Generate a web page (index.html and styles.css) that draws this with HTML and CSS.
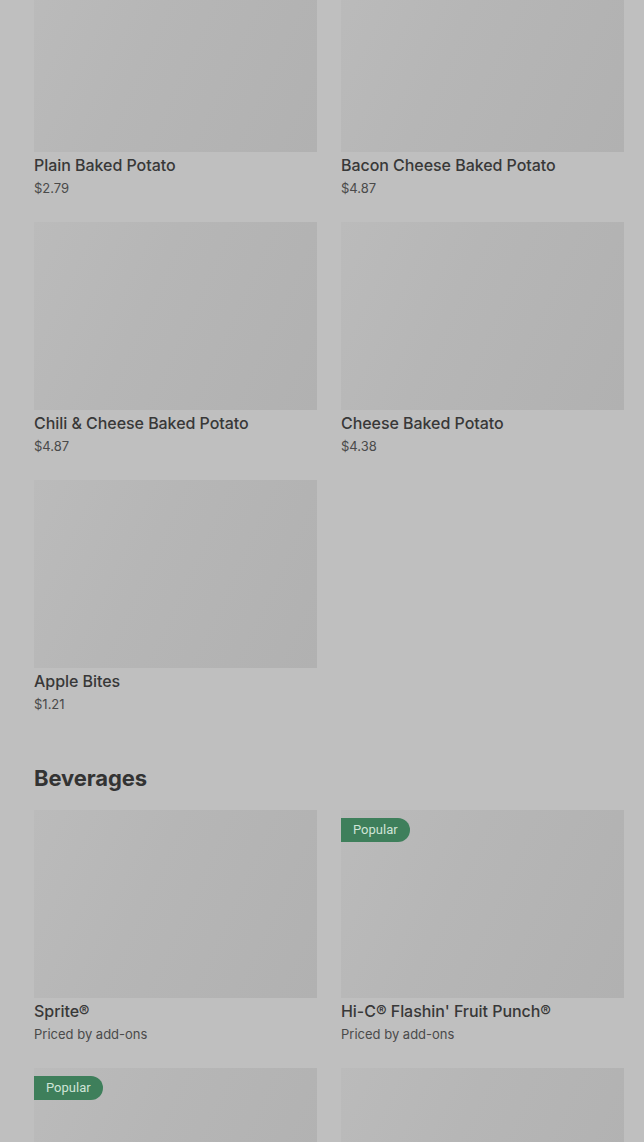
FILE: index.html
```html
<!DOCTYPE html>
<html>
<head>
<meta charset="utf-8">
<link rel="stylesheet" href="styles.css">
</head>
<body>
<main class="menu">
  <section class="section first">
    <div class="grid">
      <div class="card"><div class="thumb"></div><div class="name">Plain Baked Potato</div><div class="price">$2.79</div></div>
      <div class="card"><div class="thumb"></div><div class="name">Bacon Cheese Baked Potato</div><div class="price">$4.87</div></div>
      <div class="card"><div class="thumb"></div><div class="name">Chili &amp; Cheese Baked Potato</div><div class="price">$4.87</div></div>
      <div class="card"><div class="thumb"></div><div class="name">Cheese Baked Potato</div><div class="price">$4.38</div></div>
      <div class="card"><div class="thumb"></div><div class="name">Apple Bites</div><div class="price">$1.21</div></div>
    </div>
  </section>
  <section class="section">
    <h2 class="heading">Beverages</h2>
    <div class="grid">
      <div class="card"><div class="thumb"></div><div class="name">Sprite®</div><div class="price">Priced by add-ons</div></div>
      <div class="card"><div class="thumb"><span class="badge">Popular</span></div><div class="name">Hi-C® Flashin' Fruit Punch®</div><div class="price">Priced by add-ons</div></div>
      <div class="card"><div class="thumb"><span class="badge">Popular</span></div></div>
      <div class="card"><div class="thumb"></div></div>
    </div>
  </section>
</main>
</body>
</html>
```
FILE: styles.css
```css
html, body {
  margin: 0;
  padding: 0;
  background: #bfbfbf;
  overflow: hidden;
  height: 1142px;
}
body {
  font-family: "Inter", "Roboto", "Liberation Sans", sans-serif;
  color: #333333;
}
.menu {
  padding: 0 20px 0 34px;
}
.section.first {
  margin-top: -36px;
}
.grid {
  display: grid;
  grid-template-columns: 283px 283px;
  column-gap: 24px;
  row-gap: 24px;
}
.card {
  display: flex;
  flex-direction: column;
}
.thumb {
  position: relative;
  height: 188px;
  background: linear-gradient(115deg, #bbbbbb 0%, #b6b6b6 40%, #b1b1b1 100%);
}
.name {
  margin-top: 3px;
  font-size: 16px;
  line-height: 20px;
  font-weight: 500;
  color: #383838;
  letter-spacing: -0.05px;
}
.price {
  margin-top: 3px;
  font-size: 13px;
  line-height: 20px;
  color: #4a4a4a;
}
.heading {
  margin: 50px 0 18px;
  font-size: 22px;
  line-height: 28px;
  font-weight: 700;
  color: #333333;
  letter-spacing: -0.1px;
}
.badge {
  position: absolute;
  left: 0;
  top: 8px;
  height: 24px;
  line-height: 24px;
  padding: 0 12px;
  font-size: 13px;
  font-family: "Roboto", "Liberation Sans", sans-serif;
  color: #cfe4d7;
  background: #3e7f5b;
  border-radius: 0 12px 12px 0;
}
```
